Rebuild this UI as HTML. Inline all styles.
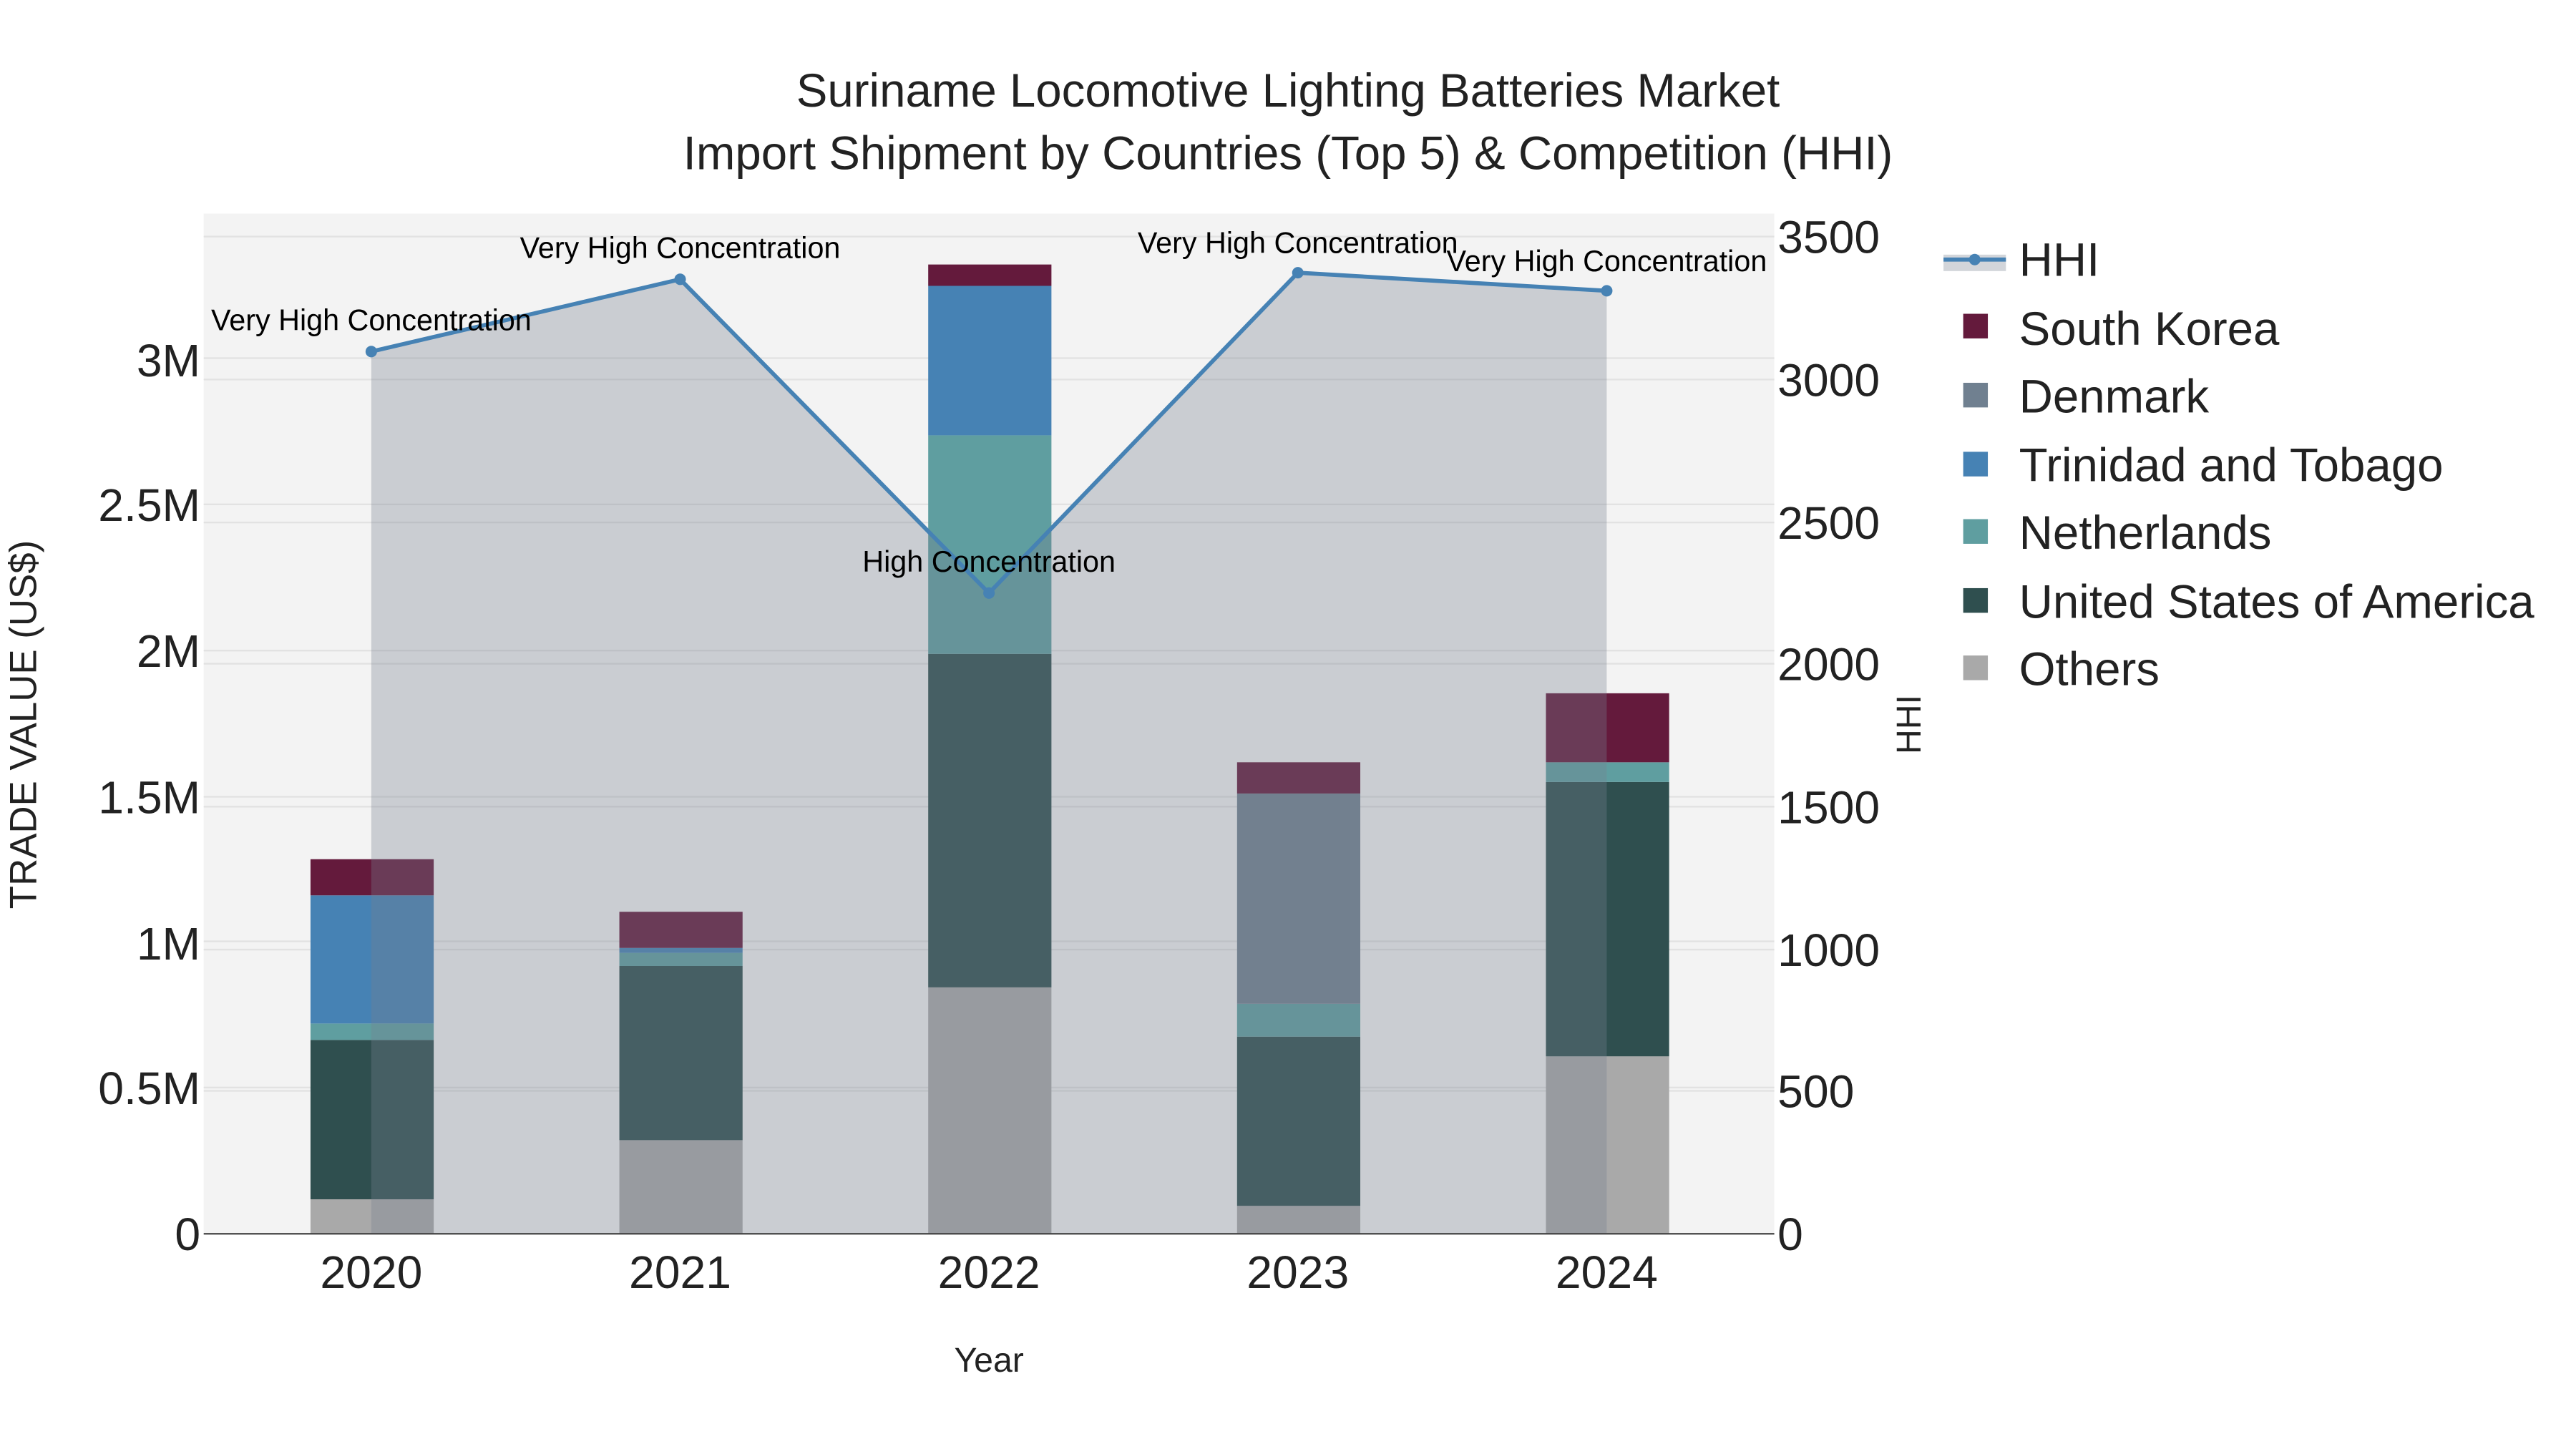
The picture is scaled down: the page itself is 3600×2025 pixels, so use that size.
<!DOCTYPE html>
<html><head><meta charset="utf-8"><style>html,body{margin:0;padding:0;background:#fff}svg{display:block}text{font-family:"Liberation Sans",sans-serif}</style></head><body>
<svg width="3600" height="2025" viewBox="0 0 1568 882" preserveAspectRatio="xMinYMin meet" xmlns="http://www.w3.org/2000/svg">
<rect x="0" y="0" width="1568" height="882" fill="#fff"/>
<rect x="124" y="130" width="956" height="621" fill="#f3f3f3"/>
<g stroke="#e2e2e2" stroke-width="1">
<line x1="124" x2="1080" y1="662" y2="662"/><line x1="124" x2="1080" y1="573" y2="573"/><line x1="124" x2="1080" y1="485" y2="485"/><line x1="124" x2="1080" y1="396" y2="396"/><line x1="124" x2="1080" y1="307" y2="307"/><line x1="124" x2="1080" y1="218" y2="218"/>
<line x1="124" x2="1080" y1="664" y2="664"/><line x1="124" x2="1080" y1="578" y2="578"/><line x1="124" x2="1080" y1="491" y2="491"/><line x1="124" x2="1080" y1="404" y2="404"/><line x1="124" x2="1080" y1="318" y2="318"/><line x1="124" x2="1080" y1="231" y2="231"/><line x1="124" x2="1080" y1="144" y2="144"/>
</g>
<g>
<rect x="189" y="730" width="75" height="21" fill="#a9a9a9"/><rect x="189" y="633" width="75" height="97" fill="#2f4f4f"/><rect x="189" y="623" width="75" height="10" fill="#5f9ea0"/><rect x="189" y="545" width="75" height="78" fill="#4682b4"/><rect x="189" y="523" width="75" height="22" fill="#641a3c"/>
<rect x="377" y="694" width="75" height="57" fill="#a9a9a9"/><rect x="377" y="588" width="75" height="106" fill="#2f4f4f"/><rect x="377" y="580" width="75" height="8" fill="#5f9ea0"/><rect x="377" y="577" width="75" height="3" fill="#4682b4"/><rect x="377" y="555" width="75" height="22" fill="#641a3c"/>
<rect x="565" y="601" width="75" height="150" fill="#a9a9a9"/><rect x="565" y="398" width="75" height="203" fill="#2f4f4f"/><rect x="565" y="265" width="75" height="133" fill="#5f9ea0"/><rect x="565" y="174" width="75" height="91" fill="#4682b4"/><rect x="565" y="161" width="75" height="13" fill="#641a3c"/>
<rect x="753" y="734" width="75" height="17" fill="#a9a9a9"/><rect x="753" y="631" width="75" height="103" fill="#2f4f4f"/><rect x="753" y="611" width="75" height="20" fill="#5f9ea0"/><rect x="753" y="483" width="75" height="128" fill="#708090"/><rect x="753" y="464" width="75" height="19" fill="#641a3c"/>
<rect x="941" y="643" width="75" height="108" fill="#a9a9a9"/><rect x="941" y="476" width="75" height="167" fill="#2f4f4f"/><rect x="941" y="464" width="75" height="12" fill="#5f9ea0"/><rect x="941" y="422" width="75" height="42" fill="#641a3c"/>
</g>
<path d="M226 214 L414 170 L602 361 L790 166 L978 177 L978 751 L226 751 Z" fill="rgba(117,127,143,0.33)"/>
<path d="M226 214 L414 170 L602 361 L790 166 L978 177" fill="none" stroke="#4682b4" stroke-width="2.5"/>
<g fill="#4682b4"><circle cx="226" cy="214" r="3.5"/><circle cx="414" cy="170" r="3.5"/><circle cx="602" cy="361" r="3.5"/><circle cx="790" cy="166" r="3.5"/><circle cx="978" cy="177" r="3.5"/></g>
<line x1="124" x2="1080" y1="751" y2="751" stroke="#444" stroke-width="1"/>
<g font-size="18" fill="#000" text-anchor="middle">
<text x="226" y="201">Very High Concentration</text><text x="414" y="157">Very High Concentration</text><text x="602" y="348">High Concentration</text><text x="790" y="154">Very High Concentration</text><text x="978" y="165">Very High Concentration</text>
</g>
<g font-size="28" fill="#222" text-anchor="end">
<text x="122" y="761">0</text><text x="122" y="672">0.5M</text><text x="122" y="584">1M</text><text x="122" y="495">1.5M</text><text x="122" y="406">2M</text><text x="122" y="317">2.5M</text><text x="122" y="229">3M</text>
</g>
<g font-size="28" fill="#222" text-anchor="start">
<text x="1082" y="761">0</text><text x="1082" y="674">500</text><text x="1082" y="588">1000</text><text x="1082" y="501">1500</text><text x="1082" y="414">2000</text><text x="1082" y="328">2500</text><text x="1082" y="241">3000</text><text x="1082" y="154">3500</text>
</g>
<g font-size="28" fill="#222" text-anchor="middle">
<text x="226" y="784">2020</text><text x="414" y="784">2021</text><text x="602" y="784">2022</text><text x="790" y="784">2023</text><text x="978" y="784">2024</text>
</g>
<text x="602" y="835" font-size="21" fill="#222" text-anchor="middle">Year</text>
<text transform="translate(22,441) rotate(-90)" font-size="23" fill="#222" text-anchor="middle">TRADE VALUE (US$)</text>
<text transform="translate(1169,441) rotate(-90)" font-size="21" fill="#222" text-anchor="middle">HHI</text>
<g font-size="28.5" fill="#222" text-anchor="middle">
<text x="784" y="65">Suriname Locomotive Lighting Batteries Market</text>
<text x="784" y="103">Import Shipment by Countries (Top 5) &amp; Competition (HHI)</text>
</g>
<g font-size="28.5" fill="#222">
<rect x="1183" y="155" width="38" height="10" fill="rgba(117,127,143,0.33)"/>
<line x1="1183" x2="1221" y1="158" y2="158" stroke="#4682b4" stroke-width="2.5"/><circle cx="1202" cy="158" r="3.5" fill="#4682b4"/>
<text x="1229" y="168">HHI</text>
<rect x="1195" y="191" width="15" height="15" fill="#641a3c"/><text x="1229" y="210">South Korea</text>
<rect x="1195" y="233" width="15" height="15" fill="#708090"/><text x="1229" y="251">Denmark</text>
<rect x="1195" y="275" width="15" height="15" fill="#4682b4"/><text x="1229" y="293">Trinidad and Tobago</text>
<rect x="1195" y="316" width="15" height="15" fill="#5f9ea0"/><text x="1229" y="334">Netherlands</text>
<rect x="1195" y="358" width="15" height="15" fill="#2f4f4f"/><text x="1229" y="376">United States of America</text>
<rect x="1195" y="399" width="15" height="15" fill="#a9a9a9"/><text x="1229" y="417">Others</text>
</g>
</svg>
</body></html>
